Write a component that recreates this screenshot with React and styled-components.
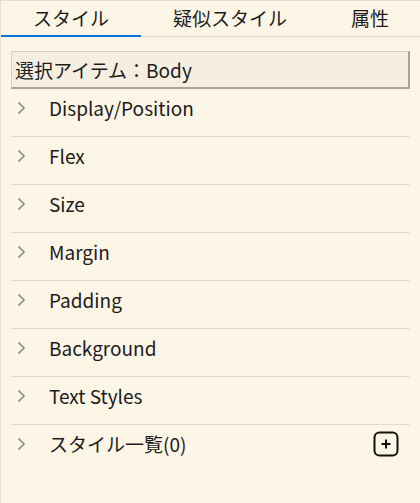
import React from "react";
import styled, { createGlobalStyle } from "styled-components";

const GlobalStyle = createGlobalStyle`
  html, body {
    margin: 0;
    padding: 0;
    background: #fdf5e6;
  }
  body {
    font-family: "Noto Sans CJK JP", "Noto Sans", sans-serif;
    color: #1c1c1c;
  }
`;

const Panel = styled.div`
  width: 420px;
  height: 503px;
  box-sizing: border-box;
  background: #fdf5e6;
  border-top: 1px solid #e6ded1;
  border-left: 1px solid #e6ded1;
`;

const TabBar = styled.div`
  display: flex;
  border-bottom: 1px solid #ddd5c8;
`;

const Tab = styled.button`
  flex: ${(p) => (p.$grow ? "1" : "0 0 auto")};
  white-space: nowrap;
  background: transparent;
  border: none;
  border-bottom: 2px solid ${(p) => (p.$active ? "#0b6fde" : "transparent")};
  margin-bottom: -1px;
  padding: 0 32px;
  height: 36px;
  font-family: inherit;
  font-size: 19px;
  line-height: 34px;
  color: #1c1c1c;
  cursor: pointer;
`;

const Body = styled.div`
  padding: 14px 10px 0;
`;

const Selected = styled.div`
  height: 38px;
  box-sizing: border-box;
  display: flex;
  align-items: center;
  padding-left: 3px;
  background: #f6efe1;
  border-top: 1px solid #d6cec2;
  border-left: 1px solid #d6cec2;
  border-right: 2px solid #a9a398;
  border-bottom: 2px solid #a9a398;
  font-size: 19px;
`;

const Section = styled.div`
  border-bottom: ${(p) => (p.$last ? "none" : "1px solid #e2dacd")};
`;

const Header = styled.div`
  display: flex;
  align-items: center;
  height: 37px;
  padding: 0 11px 10px 5px;
`;

const Chevron = styled.span`
  display: flex;
  width: 27px;
  margin-right: 6px;
  color: #8a8680;
`;

const Label = styled.span`
  flex: 1;
  font-size: 19px;
`;

const AddButton = styled.span`
  display: flex;
  color: #111;
`;

const ChevronIcon = () => (
  <svg width="12" height="14" viewBox="0 0 12 14">
    <path d="M2.5 1.5 L8 7 L2.5 12.5" fill="none" stroke="currentColor" strokeWidth="1.6" />
  </svg>
);

const PlusIcon = () => (
  <svg width="26" height="26" viewBox="0 0 26 26">
    <rect x="1.5" y="1.5" width="23" height="23" rx="5" fill="none" stroke="currentColor" strokeWidth="2" />
    <path d="M13 8.5 V17.5 M8.5 13 H17.5" stroke="currentColor" strokeWidth="2" />
  </svg>
);

const sections = [
  "Display/Position",
  "Flex",
  "Size",
  "Margin",
  "Padding",
  "Background",
  "Text Styles",
];

export default function App() {
  return (
    <>
      <GlobalStyle />
      <Panel>
        <TabBar>
          <Tab $active>スタイル</Tab>
          <Tab>疑似スタイル</Tab>
          <Tab $grow>属性</Tab>
        </TabBar>
        <Body>
          <Selected>選択アイテム：Body</Selected>
          {sections.map((s) => (
            <Section key={s}>
              <Header>
                <Chevron>
                  <ChevronIcon />
                </Chevron>
                <Label>{s}</Label>
              </Header>
            </Section>
          ))}
          <Section $last>
            <Header>
              <Chevron>
                <ChevronIcon />
              </Chevron>
              <Label>スタイル一覧(0)</Label>
              <AddButton>
                <PlusIcon />
              </AddButton>
            </Header>
          </Section>
        </Body>
      </Panel>
    </>
  );
}
